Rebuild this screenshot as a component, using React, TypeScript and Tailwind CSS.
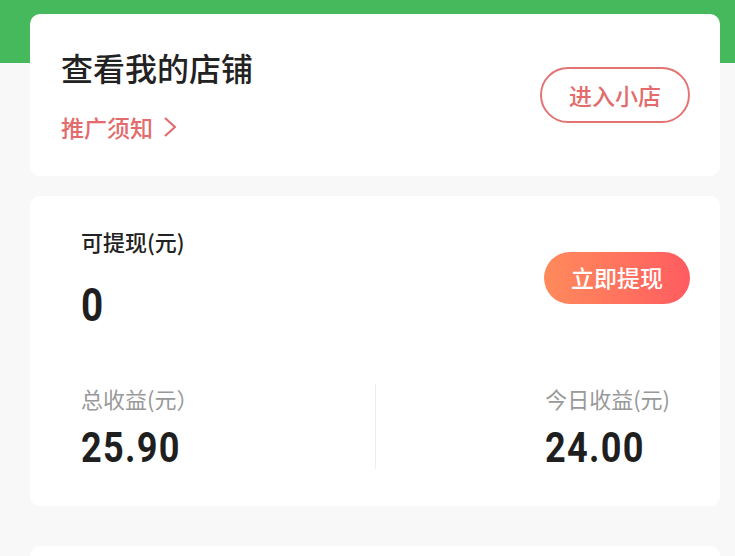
const cjk = { fontFamily: '"Noto Sans CJK SC", "Noto Sans", sans-serif' };
const num = { fontFamily: 'Roboto, "Liberation Sans", sans-serif' };

function Amount({ value, size }: { value: string; size: "lg" | "md" }) {
  return (
    <div
      style={num}
      className={`inline-block origin-left scale-x-[0.84] font-bold tracking-[1.5px] text-[#1f1f1f] ${
        size === "lg" ? "text-[46px] leading-[46px]" : "text-[43px] leading-[43px]"
      }`}
    >
      {value}
    </div>
  );
}

export default function App() {
  return (
    <div style={cjk} className="h-[556px] overflow-hidden bg-[#f8f8f8]">
      <div className="h-[63px] bg-[#45b95b]" />

      <div className="-mt-[49px] flex flex-col pl-[30px] pr-[15px]">
        {/* shop card */}
        <div className="flex h-[162px] items-center justify-between rounded-[10px] bg-white pl-[31px] pr-[30px]">
          <div className="flex flex-col">
            <div className="text-[32px] font-medium leading-[34px] text-[#222]">查看我的店铺</div>
            <div className="mt-[30px] flex items-center gap-[10px] text-[23px] font-medium leading-[26px] text-[#e36b6b]">
              <span>推广须知</span>
              <svg width="14" height="22" viewBox="0 0 14 22" fill="none">
                <polyline points="2,2 12,11 2,20" stroke="#e36b6b" strokeWidth="2.2" strokeLinejoin="round" />
              </svg>
            </div>
          </div>
          <button className="flex h-[56px] w-[150px] items-center justify-center rounded-full border-2 border-[#e47474] text-[23px] font-medium text-[#e36b6b]">
            进入小店
          </button>
        </div>

        {/* earnings card */}
        <div className="mt-[20px] flex h-[310px] flex-col rounded-[10px] bg-white pt-[31px]">
          <div className="flex items-center justify-between pl-[51px] pr-[30px]">
            <div className="flex flex-col">
              <div className="text-[22px] font-medium leading-[28px] text-[#222]">可提现(元)</div>
              <div className="mt-[27px]">
                <Amount value="0" size="lg" />
              </div>
            </div>
            <button className="flex h-[52px] w-[146px] items-center justify-center rounded-full bg-gradient-to-r from-[#ff8a5b] to-[#ff5b60] text-[23px] font-medium text-white">
              立即提现
            </button>
          </div>

          <div className="mt-[56px] flex px-[50px]">
            <div className="flex flex-1 flex-col pl-px">
              <div className="text-[22px] leading-[28px] text-[#999999]">总收益(元）</div>
              <div className="mt-[14px]">
                <Amount value="25.90" size="md" />
              </div>
            </div>
            <div className="w-px self-stretch bg-[#eeeeee]" />
            <div className="flex flex-1 justify-end">
              <div className="flex flex-col whitespace-nowrap">
                <div className="text-[22px] leading-[28px] text-[#999999]">今日收益(元)</div>
                <div className="mt-[14px]">
                  <Amount value="24.00" size="md" />
                </div>
              </div>
            </div>
          </div>
        </div>

        <div className="mt-[40px] h-[100px] rounded-[10px] bg-white" />
      </div>
    </div>
  );
}
